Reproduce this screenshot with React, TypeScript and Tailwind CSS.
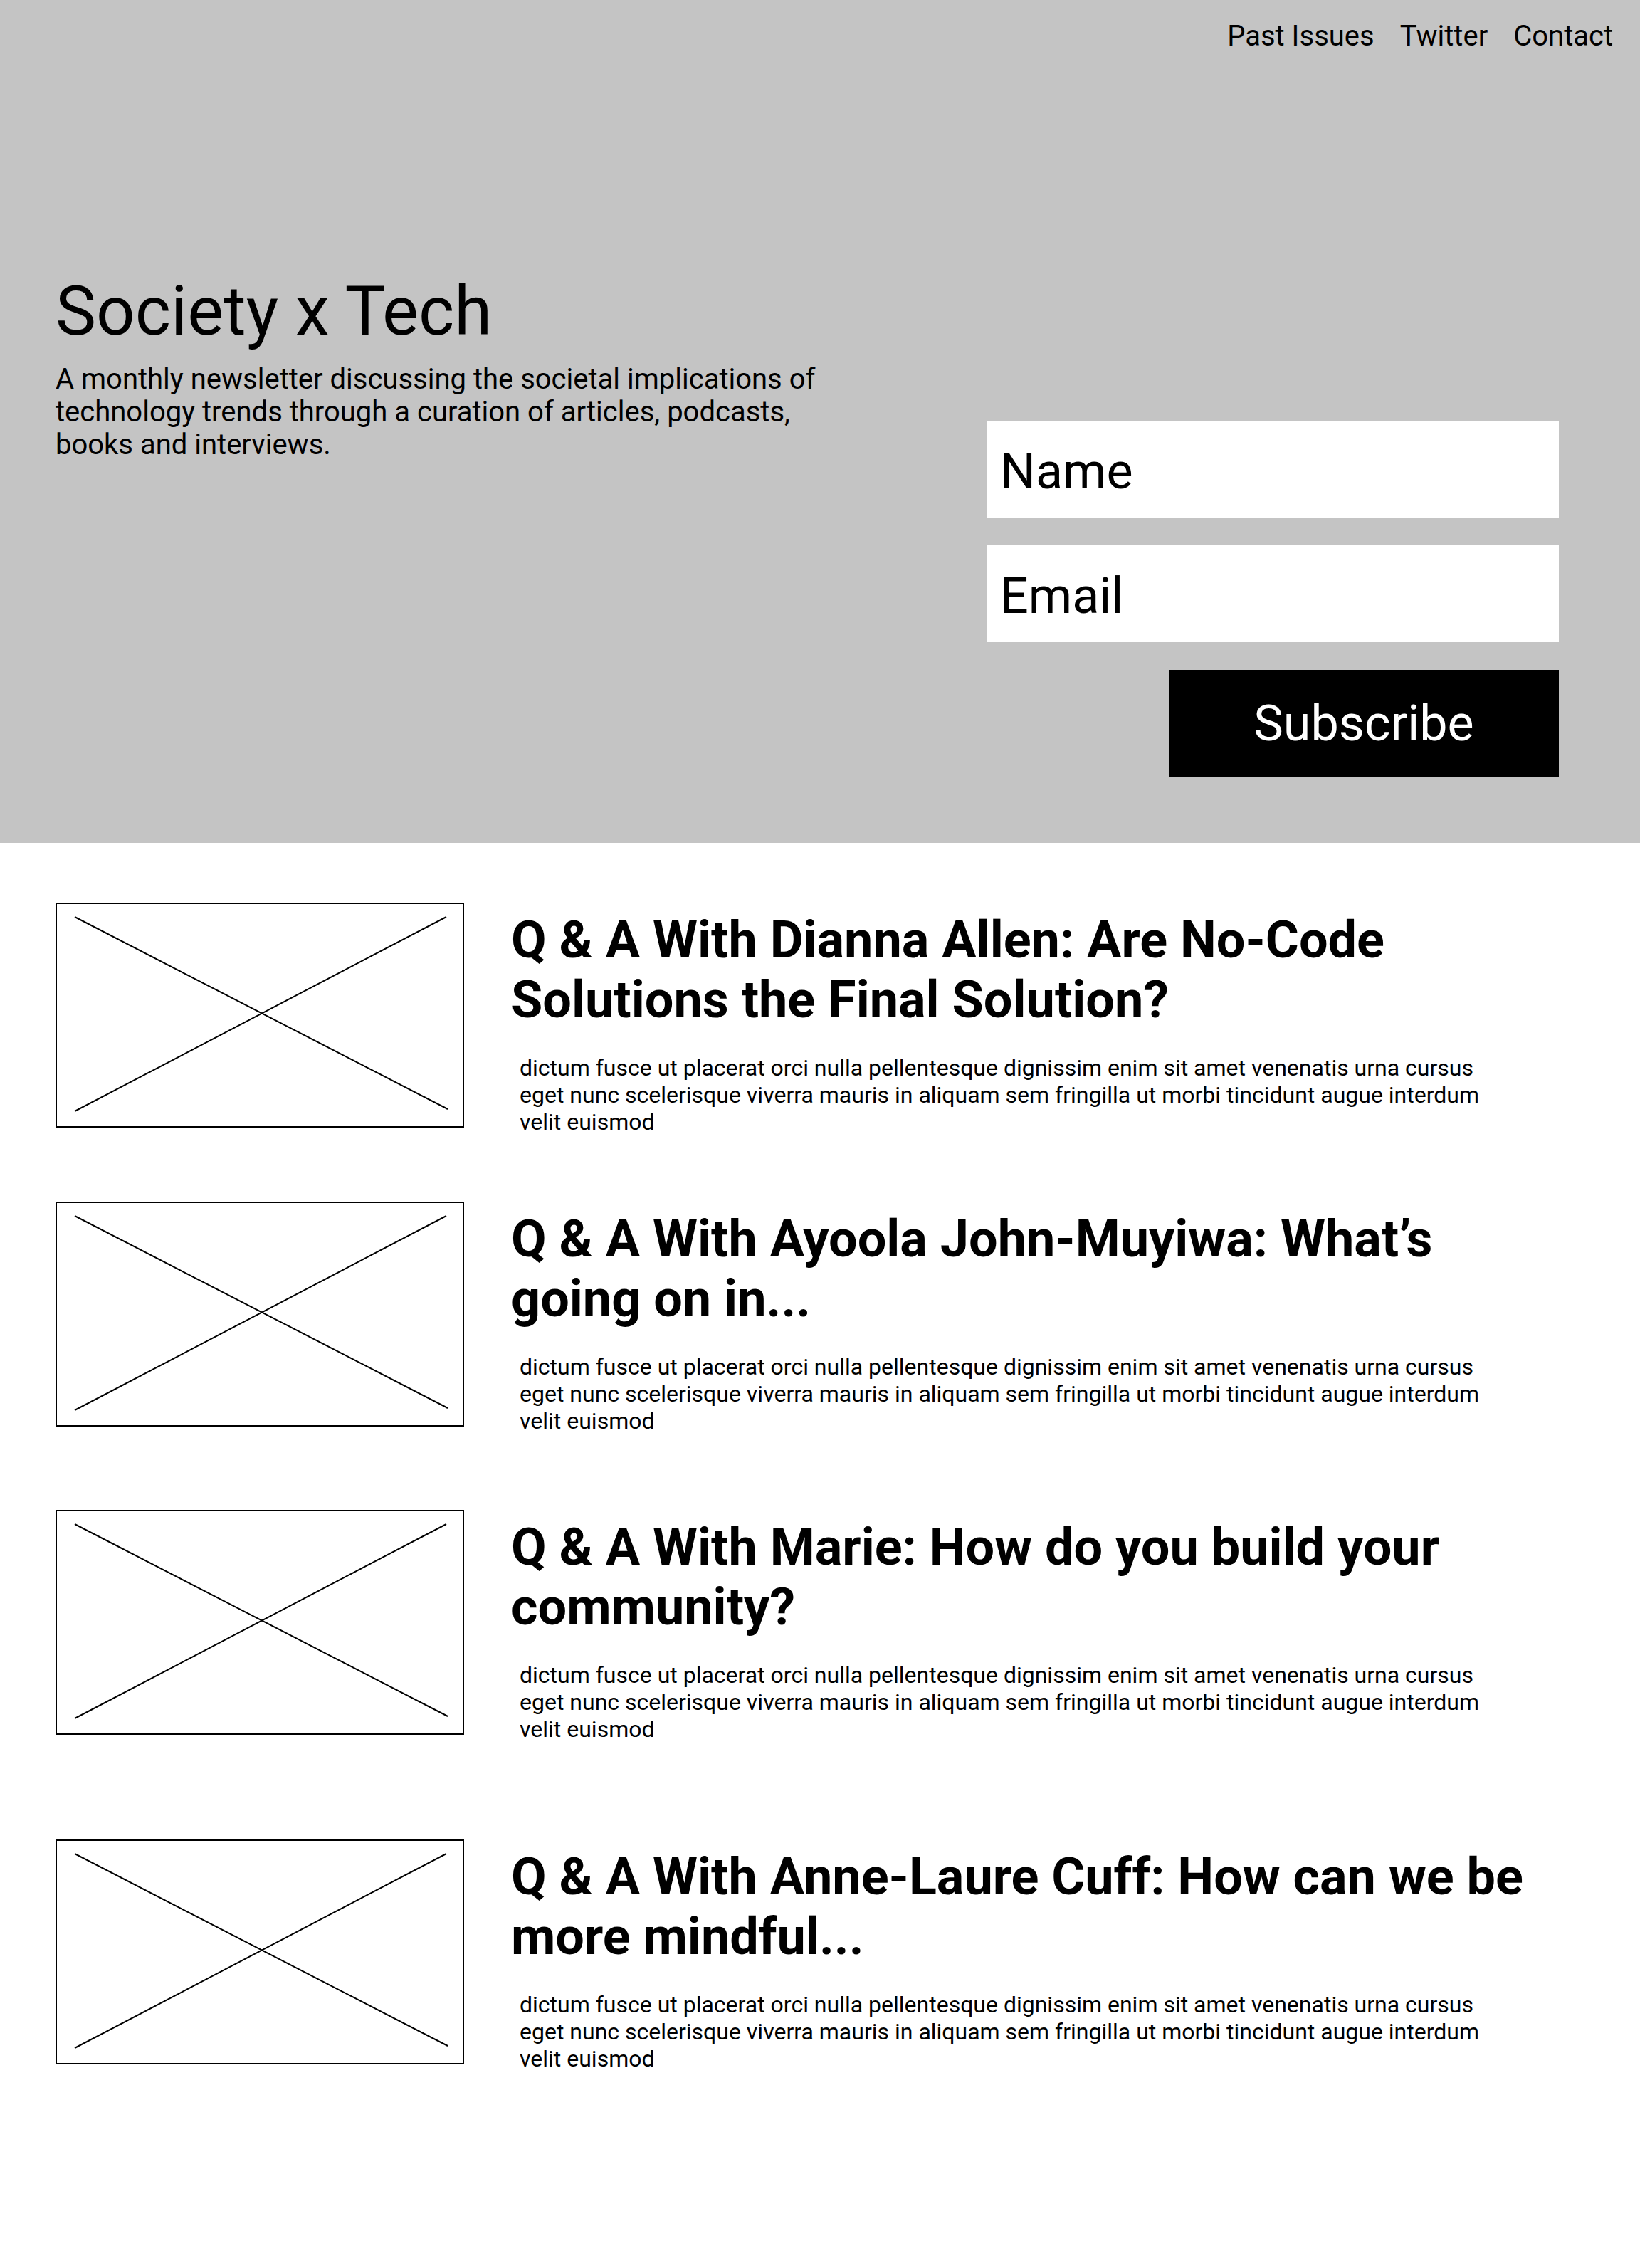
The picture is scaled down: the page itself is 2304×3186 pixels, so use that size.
import React from 'react';

interface Post {
  title: string;
  spacing: string;
}

const posts: Post[] = [
  { title: 'Q & A With Dianna Allen: Are No-Code Solutions the Final Solution?', spacing: 'mt-[84px]' },
  { title: 'Q & A With Ayoola John-Muyiwa: What’s going on in...', spacing: 'mt-[93px]' },
  { title: 'Q & A With Marie: How do you build your community?', spacing: 'mt-[106px]' },
  { title: 'Q & A With Anne-Laure Cuff: How can we be more mindful...', spacing: 'mt-[136px]' },
];

const excerpt =
  'dictum fusce ut placerat orci nulla pellentesque dignissim enim sit amet venenatis urna cursus eget nunc scelerisque viverra mauris in aliquam sem fringilla ut morbi tincidunt augue interdum velit euismod';

// Placeholder image: a bordered box with a cross through it
const ImagePlaceholder: React.FC = () => (
  <div className="w-[574px] h-[316px] shrink-0 border-2 border-black bg-white">
    <svg className="w-full h-full" viewBox="0 0 570 312" preserveAspectRatio="none">
      <line x1="25" y1="18" x2="549" y2="288" stroke="black" strokeWidth="2" />
      <line x1="547" y1="18" x2="25" y2="291" stroke="black" strokeWidth="2" />
    </svg>
  </div>
);

const App: React.FC = () => {
  return (
    <div className="min-h-screen bg-white text-black font-['Roboto',sans-serif]">
      {/* Hero */}
      <header className="h-[1184px] bg-[#c4c4c4]">
        <nav className="flex justify-end gap-9 pt-[27px] pr-[38px] text-[40px] leading-[47px]">
          <a href="#">Past Issues</a>
          <a href="#">Twitter</a>
          <a href="#">Contact</a>
        </nav>

        <div className="flex justify-between items-start">
          <div className="mt-[307px] pl-[78px]">
            <h1 className="text-[96px] leading-[112px] font-normal">Society x Tech</h1>
            <p className="mt-[17px] w-[1100px] text-[40px] leading-[46px]">
              A monthly newsletter discussing the societal implications of technology trends through a
              curation of articles, podcasts, books and interviews.
            </p>
          </div>

          <form className="mt-[517px] mr-[114px] w-[804px] flex flex-col" onSubmit={(e) => e.preventDefault()}>
            <input
              type="text"
              placeholder="Name"
              className="h-[136px] bg-white pl-[19px] pt-[6px] text-[70px] outline-none placeholder:text-black"
            />
            <input
              type="email"
              placeholder="Email"
              className="mt-[39px] h-[136px] bg-white pl-[19px] pt-[5px] text-[70px] outline-none placeholder:text-black"
            />
            <button
              type="submit"
              className="mt-[39px] self-end w-[548px] h-[150px] bg-black text-white text-[70px]"
            >
              Subscribe
            </button>
          </form>
        </div>
      </header>

      {/* Past issues list */}
      <main className="pl-[78px] pb-[120px]">
        {posts.map((post) => (
          <article key={post.title} className={`flex items-start ${post.spacing}`}>
            <ImagePlaceholder />
            <div className="ml-[66px] pt-[11px] w-[1472px]">
              <h2 className="text-[72px] leading-[84px] font-bold">{post.title}</h2>
              <p className="mt-[34px] ml-3 w-[1370px] text-[32px] leading-[38px]">{excerpt}</p>
            </div>
          </article>
        ))}
      </main>
    </div>
  );
};

export default App;
